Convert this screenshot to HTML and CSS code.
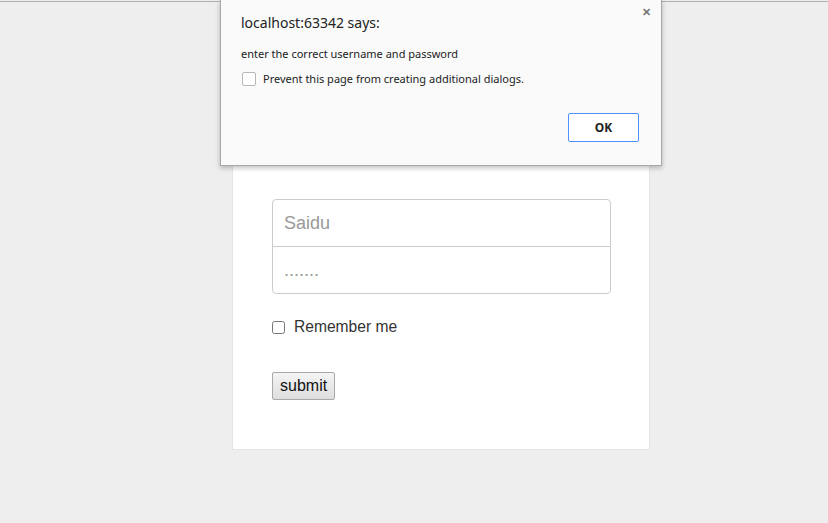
FILE: index.html
```html
<!DOCTYPE html>
<html>
<head>
<meta charset="utf-8">
<title>Sign in</title>
<link rel="stylesheet" href="styles.css">
</head>
<body>
<div class="topline"></div>
<main class="page">
  <form class="card">
    <h2 class="heading">Please sign in</h2>
    <div class="field-group">
      <input class="field" type="text" placeholder="Saidu">
      <input class="field" type="text" placeholder=".......">
    </div>
    <label class="remember"><input type="checkbox" class="remember-box"><span>Remember me</span></label>
    <button type="button" class="submit">submit</button>
  </form>
</main>
<div class="dialog">
  <div class="dialog-close">&#x2715;</div>
  <div class="dialog-title">localhost:63342 says:</div>
  <div class="dialog-msg">enter the correct username and password</div>
  <label class="dialog-check"><span class="dialog-box"></span><span>Prevent this page from creating additional dialogs.</span></label>
  <div class="dialog-actions"><button type="button" class="dialog-ok">OK</button></div>
</div>
</body>
</html>
```
FILE: styles.css
```css
html, body {
  margin: 0;
  padding: 0;
  background: #eeeeee;
  height: 100%;
  overflow: hidden;
}
body {
  font-family: "Liberation Sans", Arial, sans-serif;
  padding-top: 1px;
  box-sizing: border-box;
}
.topline {
  height: 1px;
  background: #aeaeae;
}
.page {
  padding-left: 232px;
  padding-top: 88px;
}
.card {
  width: 418px;
  box-sizing: border-box;
  background: #fff;
  border: 1px solid #e4e4e4;
  padding: 42px 39px 49px 39px;
  display: flex;
  flex-direction: column;
  align-items: flex-start;
}
.heading {
  font-size: 30px;
  font-weight: 500;
  line-height: 33px;
  margin: 0 0 33px 0;
  color: #222;
}
.field-group {
  width: 339px;
  border: 1px solid #cccccc;
  border-radius: 4px;
  box-sizing: border-box;
  display: flex;
  flex-direction: column;
}
.field {
  border: 0;
  height: 46px;
  padding: 0 11px;
  font-family: "Liberation Sans", Arial, sans-serif;
  font-size: 18px;
  background: transparent;
  outline: none;
  box-sizing: border-box;
  width: 100%;
}
.field + .field {
  border-top: 1px solid #cccccc;
  height: 47px;
}
.field::placeholder {
  color: #999999;
}
.remember {
  margin-top: 26px;
  display: flex;
  align-items: center;
  font-size: 15.6px;
  color: #333;
  height: 14px;
}
.remember-box {
  margin: 0 9px 0 0;
  width: 13px;
  height: 13px;
}
.submit {
  margin-top: 38px;
  font-family: "Liberation Sans", Arial, sans-serif;
  font-size: 16px;
  color: #111;
  height: 28px;
  padding: 0 7px;
  border: 1px solid #a9a9a9;
  border-radius: 2px;
  background: linear-gradient(#f4f4f4, #dedede);
}

.dialog {
  position: absolute;
  left: 220px;
  top: 0;
  width: 442px;
  height: 166px;
  box-sizing: border-box;
  background: #fafafa;
  border: 1px solid #a8a8a8;
  border-top: 0;
  box-shadow: 0 2px 5px rgba(0,0,0,0.25);
  font-family: "Noto Sans", "Open Sans", sans-serif;
  color: #222;
  padding: 13px 20px 0 20px;
}
.dialog-close {
  position: absolute;
  right: 10px;
  top: 4px;
  font-size: 11px;
  font-weight: bold;
  color: #777;
}
.dialog-title {
  font-size: 14px;
  line-height: 20px;
  color: #222;
}
.dialog-msg {
  font-size: 11px;
  line-height: 15px;
  margin-top: 13px;
}
.dialog-check {
  display: flex;
  align-items: center;
  font-size: 11px;
  margin-top: 10px;
  margin-left: 1px;
}
.dialog-box {
  width: 12px;
  height: 12px;
  border: 1px solid #b8b8b8;
  border-radius: 2px;
  background: #fff;
  margin-right: 7px;
}
.dialog-actions {
  display: flex;
  justify-content: flex-end;
  margin-top: 27px;
  padding-right: 2px;
}
.dialog-ok {
  width: 71px;
  height: 29px;
  border: 1px solid #4d90fe;
  border-radius: 2px;
  background: #fff;
  font-family: "Noto Sans", "Open Sans", sans-serif;
  font-size: 12px;
  font-weight: bold;
  color: #222;
}
```
